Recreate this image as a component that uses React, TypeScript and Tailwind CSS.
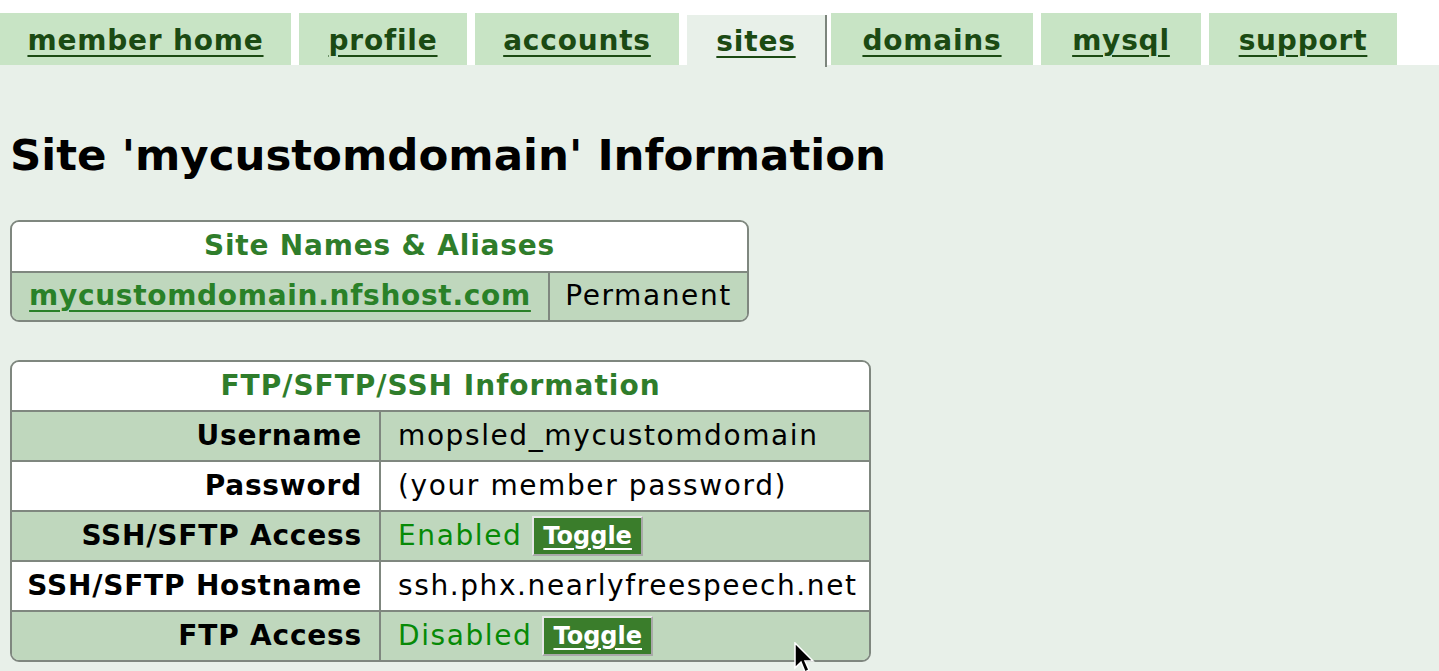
import React from 'react'

const tabs = [
  { label: 'member home', w: 'w-[291px]' },
  { label: 'profile', w: 'w-[168px]' },
  { label: 'accounts', w: 'w-[204px]' },
  { label: 'sites', w: 'w-[140px]', active: true },
  { label: 'domains', w: 'w-[202px]' },
  { label: 'mysql', w: 'w-[160px]' },
  { label: 'support', w: 'w-[188px]' },
]

const Toggle = () => (
  <span className="inline-flex items-center h-[40px] px-[9px] bg-[#3a7d2b] border-2 border-t-[#e6e6e6] border-l-[#e6e6e6] border-r-[#a9a9a9] border-b-[#a9a9a9] text-white font-bold text-[24px] tracking-normal underline underline-offset-[4px] decoration-2">
    Toggle
  </span>
)

const rows = [
  { label: 'Username', value: <span>mopsled_mycustomdomain</span>, green: true },
  { label: 'Password', value: <span>(your member password)</span> },
  {
    label: 'SSH/SFTP Access',
    value: (
      <span className="flex items-center gap-[10px]">
        <span className="text-[#078a07]">Enabled</span>
        <Toggle />
      </span>
    ),
    green: true,
  },
  { label: 'SSH/SFTP Hostname', value: <span>ssh.phx.nearlyfreespeech.net</span> },
  {
    label: 'FTP Access',
    value: (
      <span className="flex items-center gap-[10px]">
        <span className="text-[#078a07]">Disabled</span>
        <Toggle />
      </span>
    ),
    green: true,
  },
]

export default function App() {
  return (
    <div className="relative min-h-[671px] bg-[#e8f0e9] text-black font-['DejaVu_Sans',sans-serif]">
      {/* tab strip */}
      <div className="bg-white pt-[13px] flex gap-[8px]">
        {tabs.map((t) =>
          t.active ? (
            <div
              key={t.label}
              className={`${t.w} h-[52px] mt-[2px] -mb-[2px] bg-[#e8f0e9] border-r-2 border-[#7c857c] flex items-center justify-center pt-[2px] -mr-[4px]`}
            >
              <a className="text-[#1b4a13] font-bold text-[28px] tracking-[0.8px] underline decoration-2 underline-offset-[5px]">{t.label}</a>
            </div>
          ) : (
            <div key={t.label} className={`${t.w} h-[52px] bg-[#c8e4c5] flex items-center justify-center pt-[4px]`}>
              <a className="text-[#1b4a13] font-bold text-[28px] tracking-[0.8px] underline decoration-2 underline-offset-[5px]">{t.label}</a>
            </div>
          ),
        )}
      </div>

      <div className="px-[10px]">
        <h1 className="text-[43.5px] font-bold leading-none pt-[69px] pb-[42px]">Site 'mycustomdomain' Information</h1>

        {/* site names */}
        <div className="w-[739px] border-2 border-[#7f877f] rounded-[9px] overflow-hidden text-[28px]">
          <div className="h-[49px] bg-white flex items-center justify-center text-[#2f7d2b] font-bold tracking-[0.8px]">Site Names &amp; Aliases</div>
          <div className="h-[49px] grid grid-cols-[538px_1fr] bg-[#bfd7bd] border-t-2 border-[#7f877f]">
            <div className="flex items-center justify-center border-r-2 border-[#7f877f]">
              <a className="text-[#2a8128] font-bold tracking-[0.7px] underline decoration-2 underline-offset-[5px]">mycustomdomain.nfshost.com</a>
            </div>
            <div className="flex items-center justify-center tracking-[1.6px]">Permanent</div>
          </div>
        </div>

        {/* ftp info */}
        <div className="mt-[38px] w-[861px] border-2 border-[#7f877f] rounded-[9px] overflow-hidden text-[28px]">
          <div className="h-[48px] bg-white flex items-center justify-center text-[#2f7d2b] font-bold tracking-[1px]">FTP/SFTP/SSH Information</div>
          {rows.map((r) => (
            <div
              key={r.label}
              className={`h-[50px] grid grid-cols-[369px_1fr] border-t-2 border-[#7f877f] ${r.green ? 'bg-[#bfd7bd]' : 'bg-white'}`}
            >
              <div className="flex items-center justify-end pr-[17px] font-bold tracking-[0.8px] border-r-2 border-[#7f877f]">{r.label}</div>
              <div className="flex items-center pl-[17px] tracking-[1.6px]">{r.value}</div>
            </div>
          ))}
        </div>
      </div>

      {/* mouse pointer */}
      <svg className="absolute left-[794px] top-[642px]" width="22" height="32" viewBox="0 0 22 32">
        <path d="M1 1 L1 26 L7 20 L11 30 L15 28 L11 19 L19 19 Z" fill="#000" stroke="#fff" strokeWidth="1.5" />
      </svg>
    </div>
  )
}
